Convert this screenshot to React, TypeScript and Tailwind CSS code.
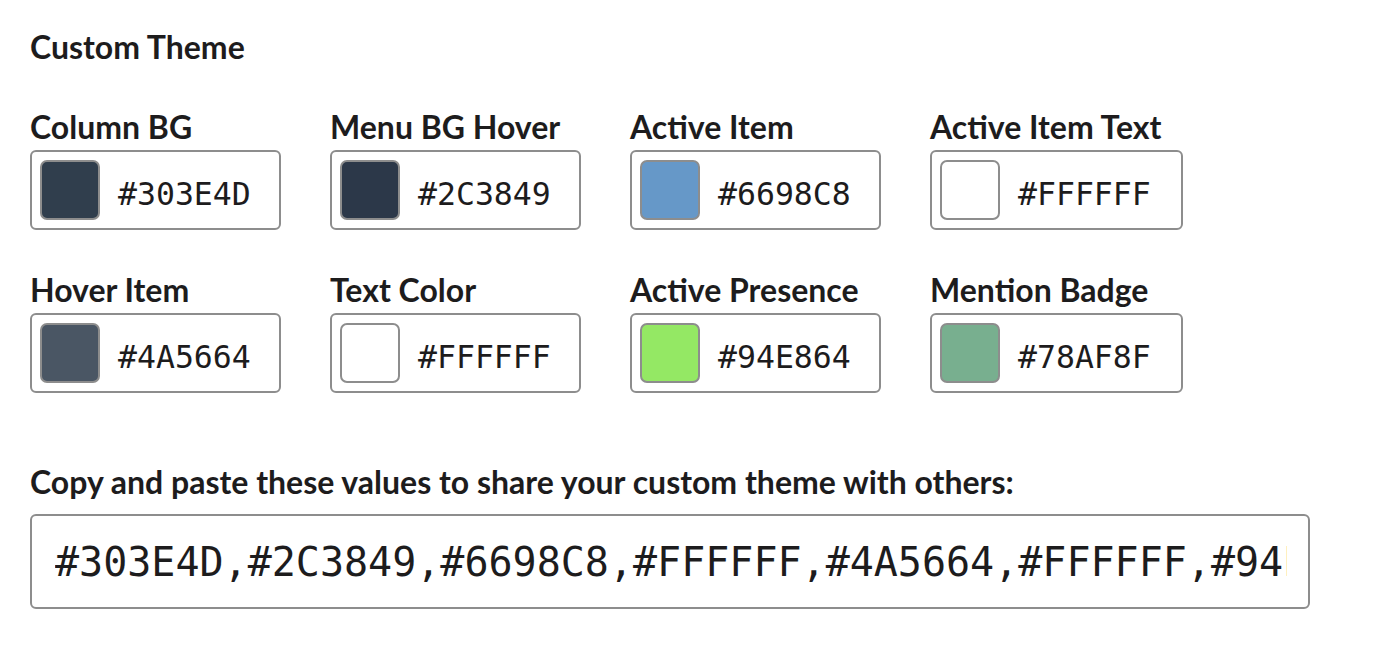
import React from 'react';

const fields = [
  { label: 'Column BG', value: '#303E4D', width: 'w-[251px]' },
  { label: 'Menu BG Hover', value: '#2C3849', width: 'w-[251px]' },
  { label: 'Active Item', value: '#6698C8', width: 'w-[251px]' },
  { label: 'Active Item Text', value: '#FFFFFF', width: 'w-[253px]' },
  { label: 'Hover Item', value: '#4A5664', width: 'w-[251px]' },
  { label: 'Text Color', value: '#FFFFFF', width: 'w-[251px]' },
  { label: 'Active Presence', value: '#94E864', width: 'w-[251px]' },
  { label: 'Mention Badge', value: '#78AF8F', width: 'w-[253px]' },
];

const ColorField = ({ label, value, width }: { label: string; value: string; width: string }) => (
  <div className="flex flex-col">
    <label className="text-[32px] font-bold leading-[40px] text-[#1d1c1d] mb-[3px]">{label}</label>
    <div className={`${width} h-[80px] flex items-center border-2 border-[#8d8d8d] rounded-[6px] pl-[8px]`}>
      <div
        className="w-[60px] h-[60px] rounded-[7px] border-2 border-[#8d8d8d] shrink-0"
        style={{ backgroundColor: value }}
      />
      <span className="ml-[18px] mt-[9px] font-['DejaVu_Sans_Mono',monospace] text-[31.5px] text-[#1d1c1d]">
        {value}
      </span>
    </div>
  </div>
);

export default function App() {
  const shareValue = fields.map((f) => f.value).join(',');

  return (
    <div className="min-h-screen bg-white font-['Lato',sans-serif] pl-[30px] pt-[27px]">
      <h2 className="text-[32px] font-bold leading-[40px] text-[#1d1c1d]">Custom Theme</h2>

      <div className="grid grid-cols-[300px_300px_300px_300px] gap-y-[40px] mt-[40px]">
        {fields.map((f) => (
          <ColorField key={f.label} {...f} />
        ))}
      </div>

      <div className="mt-[69px]">
        <label className="block text-[32px] font-bold leading-[40px] text-[#1d1c1d] mb-[12px]">
          Copy and paste these values to share your custom theme with others:
        </label>
        <input
          readOnly
          value={shareValue}
          className="w-[1280px] h-[95px] border-2 border-[#8d8d8d] rounded-[6px] pl-[23px] pr-[21px] font-['DejaVu_Sans_Mono',monospace] text-[40px] text-[#1d1c1d] outline-none"
        />
      </div>
    </div>
  );
}
